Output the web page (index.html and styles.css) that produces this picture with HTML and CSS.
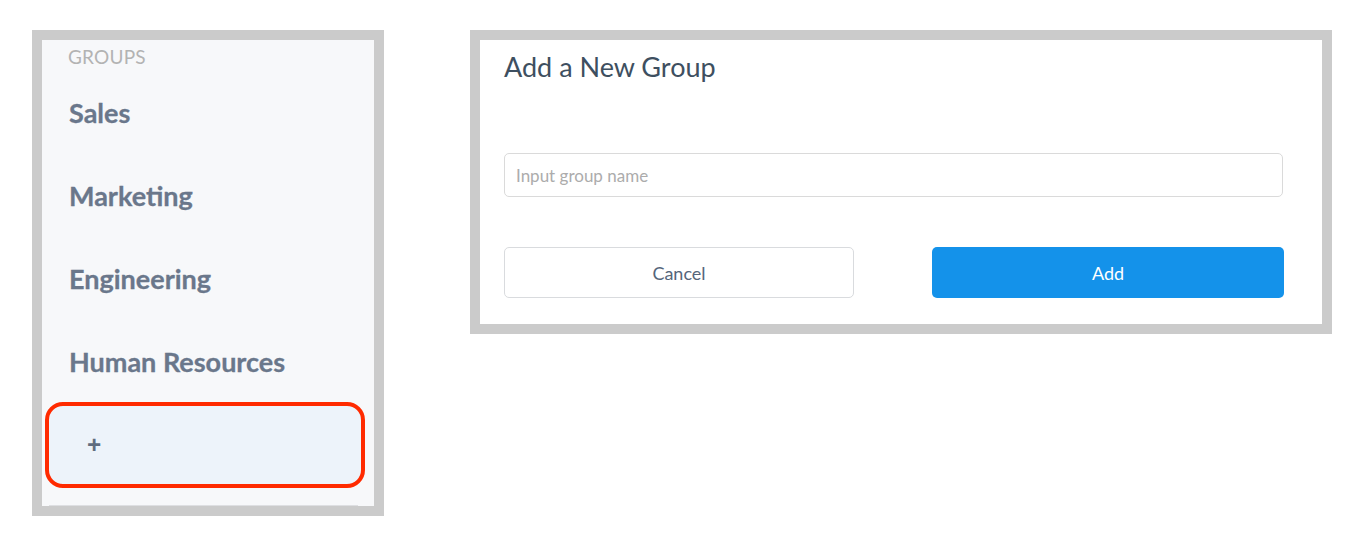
FILE: index.html
```html
<!DOCTYPE html>
<html>
<head>
<meta charset="utf-8">
<link rel="stylesheet" href="styles.css">
</head>
<body>
<div class="page">
  <aside class="groups">
    <div class="groups-label">GROUPS</div>
    <div class="group-item">Sales</div>
    <div class="group-item">Marketing</div>
    <div class="group-item">Engineering</div>
    <div class="group-item">Human Resources</div>
    <div class="add-item"><span class="plus">+</span></div>
    <div class="next-edge"></div>
  </aside>
  <section class="dialog">
    <h1 class="dialog-title">Add a New Group</h1>
    <input class="group-input" type="text" placeholder="Input group name">
    <div class="actions">
      <button class="btn btn-cancel">Cancel</button>
      <button class="btn btn-add">Add</button>
    </div>
  </section>
</div>
</body>
</html>
```
FILE: styles.css
```css
* { box-sizing: border-box; }
html, body { margin: 0; padding: 0; background: #ffffff; }
body { font-family: Lato, "Noto Sans", sans-serif; }

.page {
  display: flex;
  align-items: flex-start;
  padding: 30px 0 0 32px;
  gap: 86px;
}

.groups {
  width: 352px;
  height: 486px;
  border: 10px solid #cbcbcb;
  background: #f7f8fa;
  display: flex;
  flex-direction: column;
  overflow: hidden;
}

.groups-label {
  flex-shrink: 0;
  padding: 5px 0 0 26px;
  height: 44px;
  font-size: 19px;
  line-height: 24px;
  color: #b3b3b3;
  letter-spacing: 0.2px;
}

.group-item {
  flex-shrink: 0;
  height: 83px;
  padding: 12px 0 0 27px;
  font-size: 27px;
  font-weight: 700;
  line-height: 34px;
  color: #6a778b;
  -webkit-text-stroke: 0.3px #6a778b;
}

.add-item {
  flex-shrink: 0;
  margin: -14px 0 0 3px;
  width: 320px;
  height: 86px;
  border: 4px solid #ff2a00;
  border-radius: 18px;
  background: #edf3fa;
  display: flex;
  align-items: center;
  padding-left: 38px;
}

.plus {
  font-family: "Noto Sans", sans-serif;
  font-size: 25px;
  font-weight: 700;
  color: #616d7f;
  line-height: 1;
  margin-bottom: 2px;
}

.next-edge {
  flex-shrink: 0;
  margin: 17px 0 0 7px;
  width: 309px;
  height: 1px;
  background: #dedfe2;
}

.dialog {
  width: 862px;
  height: 304px;
  border: 10px solid #cbcbcb;
  background: #ffffff;
  padding: 0 38px 0 24px;
  display: flex;
  flex-direction: column;
}

.dialog-title {
  margin: 0;
  padding-top: 9px;
  font-size: 27px;
  font-weight: 400;
  line-height: 36px;
  color: #3e4f60;
}

.group-input {
  margin-top: 68px;
  width: 779px;
  height: 44px;
  border: 1px solid #dadada;
  border-radius: 5px;
  padding: 0 11px;
  font-family: Lato, "Noto Sans", sans-serif;
  font-size: 17px;
  color: #333;
  outline: none;
}
.group-input::placeholder { color: #acacac; }

.actions {
  margin-top: 50px;
  display: flex;
  justify-content: space-between;
  width: 780px;
}

.btn {
  height: 51px;
  border-radius: 5px;
  font-family: Lato, "Noto Sans", sans-serif;
  font-size: 18px;
  cursor: pointer;
}
.btn-cancel {
  width: 350px;
  background: #ffffff;
  border: 1px solid #d9dbde;
  color: #55657a;
}
.btn-add {
  width: 352px;
  background: #1492ea;
  border: none;
  color: #ffffff;
}
```
